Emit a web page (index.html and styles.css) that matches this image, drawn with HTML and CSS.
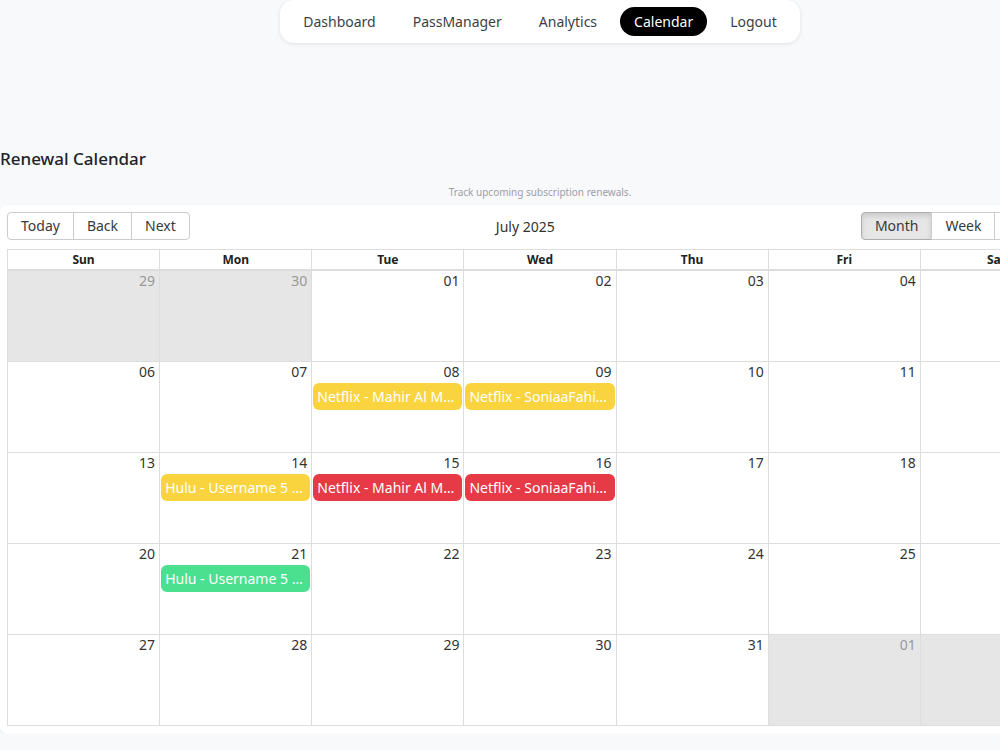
FILE: index.html
```html
<!DOCTYPE html>
<html lang="en">
<head>
  <meta charset="UTF-8">
  <title>Calendar</title>
  <link rel="stylesheet" href="styles.css">
</head>
<body>
  <div class="page">
    <nav class="topnav">
      <a href="#">Dashboard</a>
      <a href="#">PassManager</a>
      <a href="#">Analytics</a>
      <a href="#" class="active">Calendar</a>
      <a href="#">Logout</a>
    </nav>

    <h2 class="title">Renewal Calendar</h2>
    <p class="subtitle">Track upcoming subscription renewals.</p>

    <div class="card">
      <div class="toolbar">
        <div class="btn-group">
          <button>Today</button>
          <button>Back</button>
          <button>Next</button>
        </div>
        <div class="label">July 2025</div>
        <div class="btn-group">
          <button class="active">Month</button>
          <button>Week</button>
          <button>Agenda</button>
        </div>
      </div>
      <div class="month" id="month">
        <div class="month-header">
          <div>Sun</div><div>Mon</div><div>Tue</div><div>Wed</div><div>Thu</div><div>Fri</div><div>Sat</div>
        </div>
      </div>
    </div>
  </div>
  <script>
    const events = {
      "2025-07-08": { title: "Netflix - Mahir Al Mahmud", color: "yellow" },
      "2025-07-09": { title: "Netflix - SoniaaFahim (Premium)", color: "yellow" },
      "2025-07-14": { title: "Hulu - Username 5 (Family)", color: "yellow" },
      "2025-07-15": { title: "Netflix - Mahir Al Mahmud", color: "red" },
      "2025-07-16": { title: "Netflix - SoniaaFahim (Premium)", color: "red" },
      "2025-07-21": { title: "Hulu - Username 5 (Family)", color: "green" }
    };

    function pad(n) {
      return n < 10 ? '0' + n : '' + n;
    }

    function buildMonth() {
      const month = document.getElementById('month');
      const start = new Date(2025, 5, 29);
      for (let w = 0; w < 5; w++) {
        const row = document.createElement('div');
        row.className = 'week';
        for (let d = 0; d < 7; d++) {
          const day = new Date(start);
          day.setDate(start.getDate() + w * 7 + d);
          const key = day.getFullYear() + '-' + pad(day.getMonth() + 1) + '-' + pad(day.getDate());
          const cell = document.createElement('div');
          cell.className = 'day' + (day.getMonth() !== 6 ? ' off' : '');
          let html = `<div class="date">${pad(day.getDate())}</div>`;
          const ev = events[key];
          if (ev) {
            html += `<div class="event ${ev.color}">${ev.title}</div>`;
          }
          cell.innerHTML = html;
          row.appendChild(cell);
        }
        month.appendChild(row);
      }
    }

    buildMonth();
  </script>
</body>
</html>
```

FILE: styles.css
```css
html, body {
  margin: 0;
  padding: 0;
  background-color: #f8f9fb;
  font-family: "Noto Sans", "Open Sans", sans-serif;
  color: #222;
}
.page {
  width: 1080px;
}
.topnav {
  width: 520px;
  box-sizing: border-box;
  margin: 0 auto;
  height: 43px;
  background: #fff;
  border-radius: 14px;
  box-shadow: 0 1px 4px rgba(0, 0, 0, 0.1);
  display: flex;
  align-items: center;
  justify-content: center;
  gap: 9px;
}
.topnav a {
  text-decoration: none;
  color: #3b3f46;
  font-size: 14px;
  padding: 4px 14px;
  line-height: 21px;
  border-radius: 15px;
}
.topnav a.active {
  background: #000;
  color: #fff;
}
.title {
  margin: 104px 0 0 0;
  font-size: 17px;
  font-weight: 500;
  color: #1f2328;
  line-height: 24px;
}
.subtitle {
  margin: 14px 0 0 0;
  text-align: center;
  font-size: 10px;
  color: #9aa0a8;
  line-height: 14px;
}
.card {
  margin-top: 6px;
  background: #fff;
  border-radius: 6px;
  box-shadow: 0 1px 3px rgba(0, 0, 0, 0.08);
  padding: 7px 7px 7px 7px;
}
.toolbar {
  display: flex;
  align-items: center;
  margin-bottom: 9px;
}
.toolbar .label {
  flex: 1;
  text-align: center;
  font-size: 14px;
  color: #333;
}
.btn-group {
  display: flex;
}
.btn-group button {
  font-family: inherit;
  font-size: 14px;
  color: #373a3c;
  background: #fff;
  border: 1px solid #ccc;
  margin-left: -1px;
  padding: 3px 13px;
  line-height: 20px;
  cursor: pointer;
}
.btn-group button:first-child {
  margin-left: 0;
  border-radius: 4px 0 0 4px;
}
.btn-group button:last-child {
  border-radius: 0 4px 4px 0;
}
.btn-group button.active {
  background: #e6e6e6;
  box-shadow: inset 0 3px 5px rgba(0, 0, 0, 0.125);
  border-color: #adadad;
}
.month {
  border: 1px solid #ddd;
}
.month-header {
  display: flex;
  border-bottom: 1px solid #ddd;
}
.month-header div {
  flex: 1;
  text-align: center;
  font-size: 12px;
  font-weight: bold;
  line-height: 19px;
  border-left: 1px solid #ddd;
}
.month-header div:first-child {
  border-left: none;
}
.week {
  display: flex;
  height: 90px;
  border-top: 1px solid #ddd;
}
.week:first-of-type {
  border-top: none;
}
.day {
  flex: 1;
  min-width: 0;
  border-left: 1px solid #ddd;
}
.day:first-child {
  border-left: none;
}
.day.off {
  background: #e6e6e6;
}
.date {
  text-align: right;
  font-size: 14px;
  line-height: 20px;
  padding: 0 4px;
  color: #333;
}
.day.off .date {
  color: #999;
}
.event {
  margin: 1px 1px 0 1px;
  padding: 3px 4px;
  border-radius: 6px;
  font-size: 14px;
  line-height: 21px;
  color: #fff;
  white-space: nowrap;
  overflow: hidden;
  text-overflow: ellipsis;
}
.event.yellow {
  background: #f9d43f;
}
.event.red {
  background: #e63a46;
}
.event.green {
  background: #4be08f;
}
```
